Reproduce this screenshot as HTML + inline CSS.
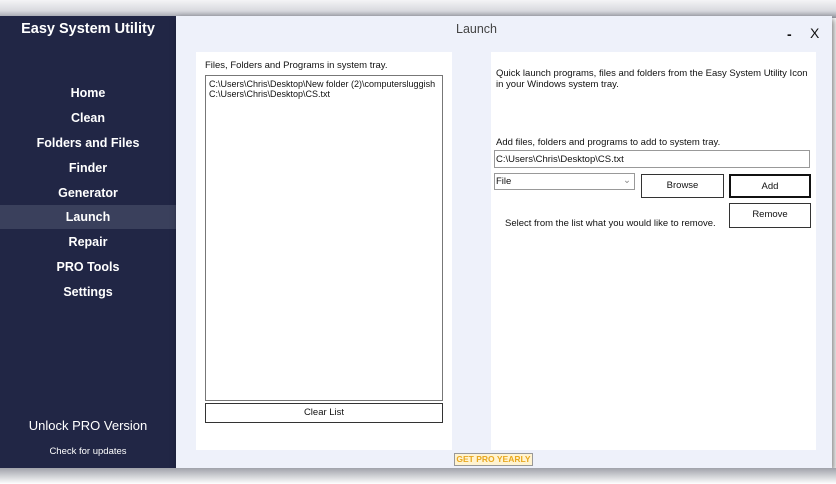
<!DOCTYPE html>
<html><head><meta charset="utf-8"><style>
*{margin:0;padding:0;box-sizing:border-box}
body{width:836px;height:484px;overflow:hidden;background:#fff;font-family:"Liberation Sans",sans-serif;position:relative}
.topshadow{position:absolute;left:0;top:0;width:836px;height:18px;background:linear-gradient(180deg,#f4f4f6 0%,#d8d9de 60%,#9a9ca6 100%)}
.side{position:absolute;left:0;top:16px;width:176px;height:452px;background:#212645;color:#fff}
.main{position:absolute;left:176px;top:16px;width:656px;height:452px;background:#eef1fa;box-shadow:2px 3px 6px rgba(0,0,0,.5)}
.bshadow{position:absolute;left:0;top:468px;width:836px;height:16px;background:linear-gradient(180deg,#a0a2aa,#fff)}
.title{position:absolute;left:0;width:176px;top:5px;text-align:center;font-size:14.5px;font-weight:bold}
.nav{position:absolute;left:0;width:176px;text-align:center;font-size:12.5px;height:24px;line-height:24px;font-weight:bold}
.sel{background:#3a405c}
.abs{position:absolute;white-space:nowrap}
.panel{position:absolute;background:#fff}
.t{font-size:9.5px;color:#111;position:absolute;white-space:nowrap}
.btn{position:absolute;background:#fff;border:1px solid #333;font-size:9.5px;text-align:center;color:#111}
</style></head><body>
<div class="topshadow"></div>
<div class="side">
<div class="title">Easy System Utility</div>
<div class="nav" style="top:65px">Home</div>
<div class="nav" style="top:90px">Clean</div>
<div class="nav" style="top:115px">Folders and Files</div>
<div class="nav" style="top:140px">Finder</div>
<div class="nav" style="top:165px">Generator</div>
<div class="nav sel" style="top:189px">Launch</div>
<div class="nav" style="top:214px">Repair</div>
<div class="nav" style="top:239px">PRO Tools</div>
<div class="nav" style="top:264px">Settings</div>
<div class="nav" style="top:398px;font-weight:normal;font-size:13px">Unlock PRO Version</div>
<div class="nav" style="top:424px;font-weight:normal;font-size:9.5px">Check for updates</div>
</div>
<div class="main">
<div class="abs" style="left:280px;top:6px;font-size:12.5px;color:#444">Launch</div>
<div class="abs" style="left:611px;top:10px;font-size:14px;color:#111;font-weight:bold">-</div>
<div class="abs" style="left:634px;top:9px;font-size:14px;color:#111">X</div>
<div class="panel" style="left:20px;top:36px;width:256px;height:398px">
<div class="t" style="left:9px;top:8px">Files, Folders and Programs in system tray.</div>
<div class="abs" style="left:9px;top:23px;width:238px;height:326px;border:1px solid #777;overflow:hidden">
<div class="t" style="left:3px;top:3px;font-size:9px">C:\Users\Chris\Desktop\New folder (2)\computersluggish</div>
<div class="t" style="left:3px;top:13px;font-size:9px">C:\Users\Chris\Desktop\CS.txt</div>
</div>
<div class="btn" style="left:9px;top:351px;width:238px;height:20px;line-height:18px">Clear List</div>
</div>
<div class="panel" style="left:315px;top:36px;width:325px;height:398px">
<div class="t" style="left:5px;top:16px">Quick launch programs, files and folders from the Easy System Utility Icon</div>
<div class="t" style="left:5px;top:27px">in your Windows system tray.</div>
<div class="t" style="left:5px;top:85px">Add files, folders and programs to add to system tray.</div>
<div class="abs" style="left:3px;top:98px;width:316px;height:18px;border:1px solid #999"><div class="t" style="left:1px;top:3px">C:\Users\Chris\Desktop\CS.txt</div></div>
<div class="abs" style="left:3px;top:121px;width:141px;height:17px;border:1px solid #999"><div class="t" style="left:1px;top:2px">File</div><div class="t" style="left:128px;top:1px;color:#888">⌄</div></div>
<div class="btn" style="left:150px;top:122px;width:83px;height:24px;line-height:22px">Browse</div>
<div class="btn" style="left:238px;top:122px;width:82px;height:24px;line-height:21px;border:2px solid #111">Add</div>
<div class="btn" style="left:238px;top:151px;width:82px;height:25px;line-height:21px">Remove</div>
<div class="t" style="left:14px;top:166px">Select from the list what you would like to remove.</div>
</div>
<div class="abs" style="left:278px;top:437px;width:79px;height:13px;border:1px solid #999;background:#fff3d0;color:#e8a820;font-size:8.5px;font-weight:bold;text-align:center;line-height:11px">GET PRO YEARLY</div>
</div>
<div class="bshadow"></div>
</body></html>
